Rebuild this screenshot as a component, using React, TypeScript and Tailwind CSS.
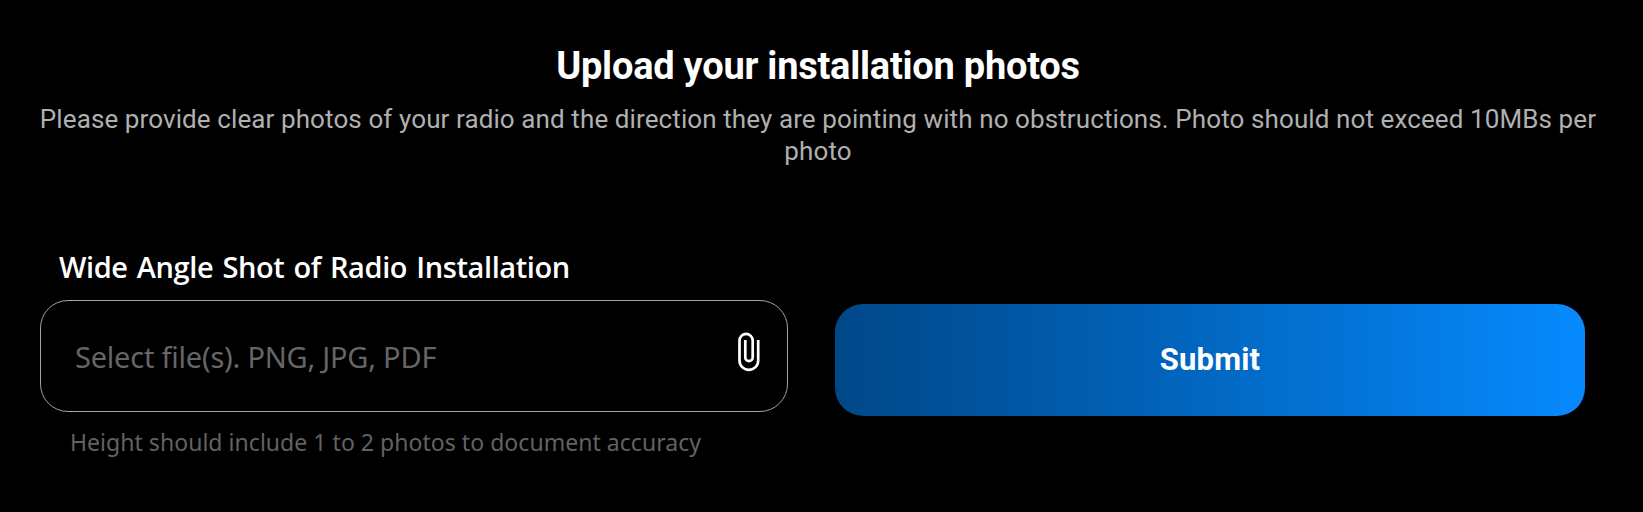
function PaperclipIcon() {
  return (
    <svg
      className="-mt-[9px] block h-[40px] w-[24px]"
      viewBox="0 0 24 40"
      fill="none"
      stroke="currentColor"
      strokeWidth="2.7"
      aria-hidden="true"
    >
      <path d="M21.2 8V28.5a9.35 9.35 0 0 1-18.7 0V8.5a6.6 6.6 0 0 1 13.2 0V25.5a3.7 3.7 0 0 1-7.4 0V8" />
    </svg>
  );
}

export default function App() {
  return (
    <main className="h-[512px] w-full overflow-hidden bg-black pt-[44px] text-white">
      <header className="flex flex-col items-center text-center font-[Roboto,sans-serif]">
        <h1 className="mr-[7px] h-[44px] text-[38px] leading-[44px] font-bold tracking-[-0.24px]">
          Upload your installation photos
        </h1>
        <p className="mt-[15px] -ml-[7px] w-[1570px] text-[26px] leading-8 tracking-[0.1px] text-[#b0b0b0]">
          Please provide clear photos of your radio and the direction they are pointing with no
          obstructions. Photo should not exceed 10MBs per photo
        </p>
      </header>

      <form className="mt-[80px] flex gap-[47px] pl-[40px]" onSubmit={(e) => e.preventDefault()}>
        <div className="w-[748px] font-['Noto_Sans',sans-serif]">
          <label className="block pl-[19px] font-['Open_Sans',sans-serif] text-[29px] leading-[40px] font-semibold tracking-[-0.4px] [word-spacing:2px]">
            Wide Angle Shot of Radio Installation
          </label>
          <div className="mt-[13px] flex h-[112px] items-center justify-between rounded-[28px] border border-[#a3a3a3] pr-[26px] pl-[34px]">
            <span className="pt-[2px] text-[29px] leading-[40px] tracking-[-0.22px] text-[#666666]">
              Select file(s). PNG, JPG, PDF
            </span>
            <PaperclipIcon />
          </div>
          <p className="mt-[14px] pl-[30px] text-[23px] leading-8 tracking-[0.04px] text-[#626262]">
            Height should include 1 to 2 photos to document accuracy
          </p>
        </div>
        <button
          type="submit"
          className="mt-[57px] h-[112px] w-[750px] rounded-[28px] bg-linear-to-r from-[#004788] to-[#078aff] font-[Roboto,sans-serif] text-[31px] font-bold tracking-[0.2px]"
        >
          Submit
        </button>
      </form>
    </main>
  );
}
